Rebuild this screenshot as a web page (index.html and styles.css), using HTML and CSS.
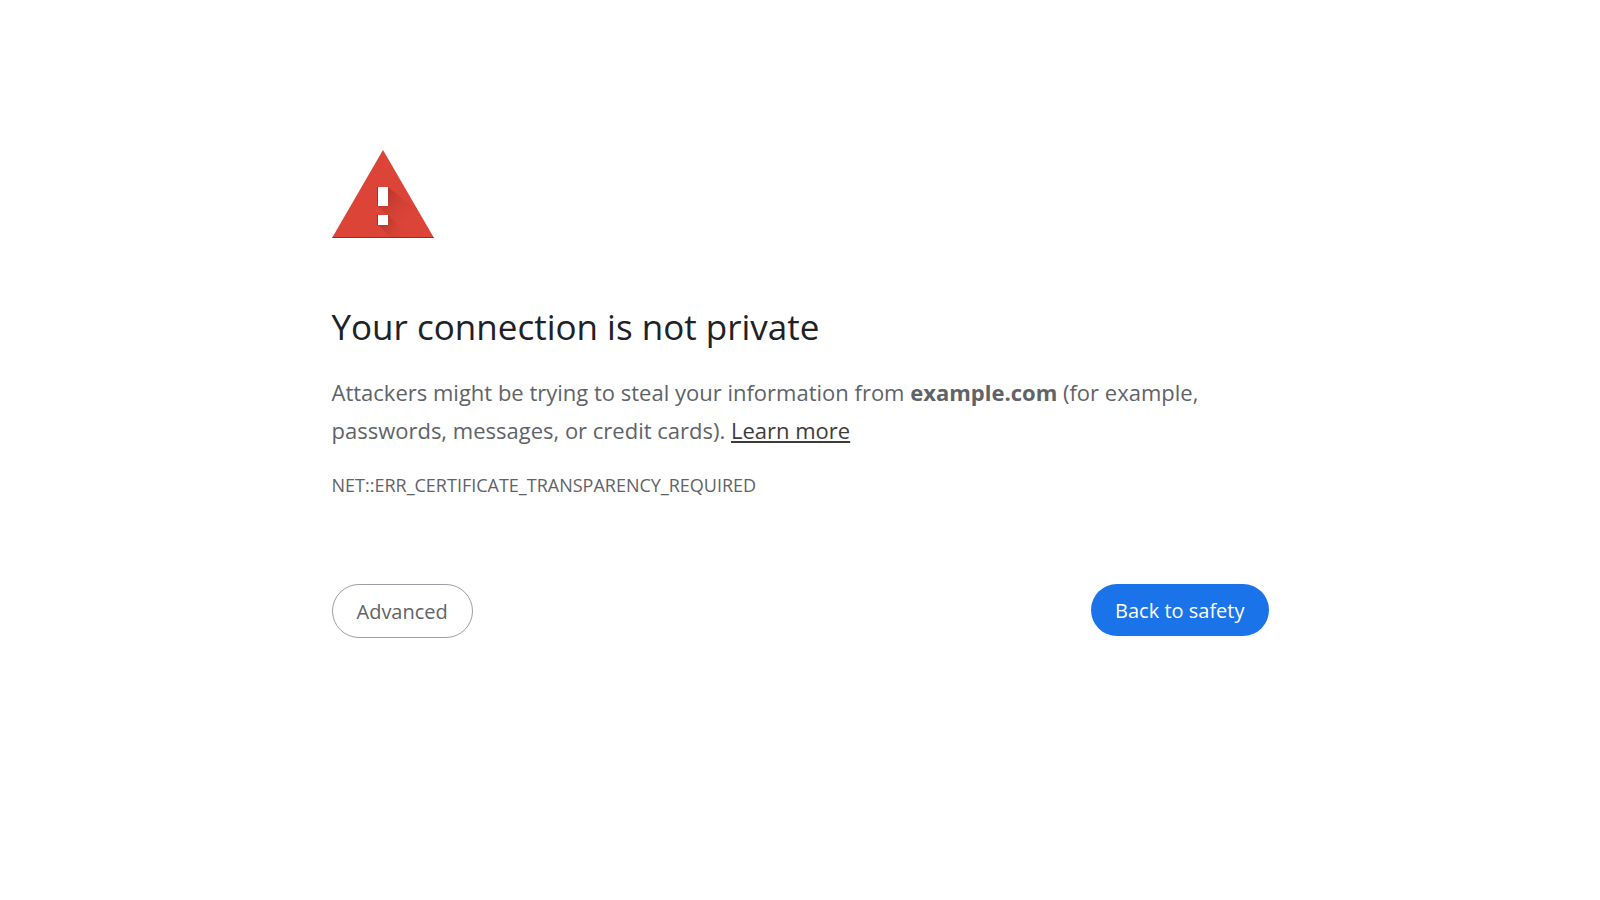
FILE: index.html
```html
<!DOCTYPE html>
<html lang="en">
<head>
    <meta charset="UTF-8">
    <meta name="viewport" content="width=device-width, initial-scale=1.0">
    <title>Privacy error</title>
    <link rel="stylesheet" href="styles.css">
</head>
<body>
    <main class="container">
        <svg class="warning-icon" viewBox="0 0 102 88" aria-hidden="true">
            <defs>
                <linearGradient id="shadow" gradientUnits="userSpaceOnUse" x1="50" y1="40" x2="80" y2="70">
                    <stop offset="0" stop-color="#a52f26" stop-opacity="0.8"/>
                    <stop offset="1" stop-color="#db4437" stop-opacity="0"/>
                </linearGradient>
                <linearGradient id="dotShadow" gradientUnits="userSpaceOnUse" x1="50" y1="68" x2="70" y2="88">
                    <stop offset="0" stop-color="#a52f26" stop-opacity="0.8"/>
                    <stop offset="1" stop-color="#db4437" stop-opacity="0"/>
                </linearGradient>
            </defs>
            <path d="M51 0 L102 88 H0 Z" fill="#db4437"/>
            <path d="M56 37 L86 61 L102 88 H78 L46 56 H56 Z" fill="url(#shadow)"/>
            <path d="M56 65 L78 88 H60 L46 75 H56 Z" fill="url(#dotShadow)"/>
            <path d="M1 87 H101 L102 88 H0 Z" fill="#b71c1c"/>
            <path d="M45 37 H47 V56 H45 Z M45 65 H47 V75 H45 Z" fill="#c1271d"/>
            <path d="M46 37 H56 V56 H46 Z M46 65 H56 V75 H46 Z" fill="#fff"/>
        </svg>

        <h1>Your connection is not private</h1>
        <p class="message">Attackers might be trying to steal your information from <strong>example.com</strong> (for example, passwords, messages, or credit cards). <a href="#">Learn more</a></p>
        <div class="error-code">NET::ERR_CERTIFICATE_TRANSPARENCY_REQUIRED</div>

        <div class="buttons">
            <button type="button" class="advanced-btn">Advanced</button>
            <button type="button" class="safety-btn">Back to safety</button>
        </div>
    </main>
</body>
</html>
```
FILE: styles.css
```css
* {
  margin: 0;
  padding: 0;
  box-sizing: border-box;
  font-family: "Segoe UI", "Open Sans", "Noto Sans", sans-serif;
}

body {
  background-color: #fff;
  color: #5f6368;
  padding: 150px 24px 24px;
}

.container {
  max-width: 937px;
  margin: 0 auto;
}

.warning-icon {
  display: block;
  width: 102px;
  height: 88px;
}

h1 {
  margin-top: 65px;
  color: #202124;
  font-size: 35px;
  font-weight: 400;
  line-height: 48px;
}

.message {
  margin-top: 22px;
  font-size: 22px;
  line-height: 38px;
}

.message strong {
  font-weight: 700;
}

.message a {
  color: #3c3c3c;
}

.error-code {
  margin-top: 24px;
  font-size: 18px;
  line-height: 24px;
}

.buttons {
  display: flex;
  justify-content: space-between;
  align-items: flex-start;
  margin-top: 87px;
}

button {
  height: 52px;
  padding: 0 24px;
  border: none;
  border-radius: 28px;
  font-size: 20px;
  cursor: pointer;
}

.advanced-btn {
  height: 54px;
  border: 1px solid #9aa0a6;
  background-color: #fff;
  color: #5f6368;
}

.safety-btn {
  background-color: #1a73e8;
  color: #fff;
}
```
